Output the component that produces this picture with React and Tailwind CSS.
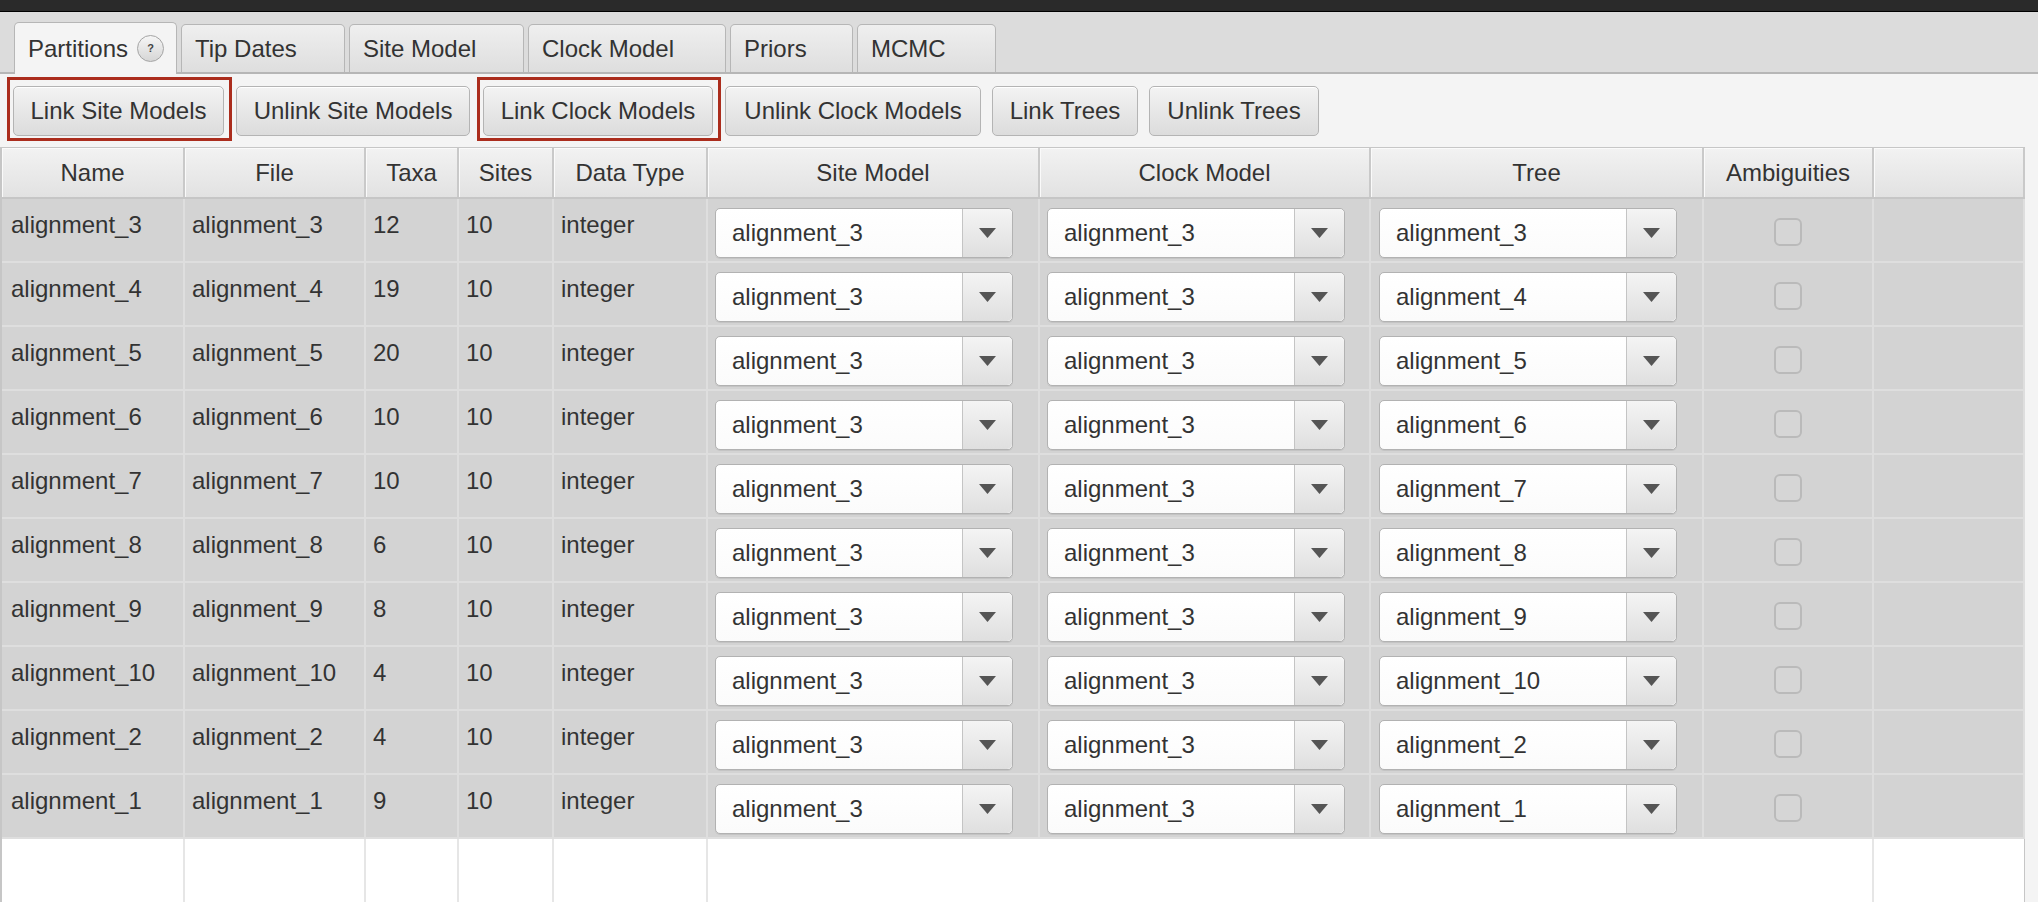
import React from 'react';

const FONT = { fontFamily: '"Liberation Sans", Arial, sans-serif' };

const rows = [
  ['alignment_3', 12, 'alignment_3'],
  ['alignment_4', 19, 'alignment_4'],
  ['alignment_5', 20, 'alignment_5'],
  ['alignment_6', 10, 'alignment_6'],
  ['alignment_7', 10, 'alignment_7'],
  ['alignment_8', 6, 'alignment_8'],
  ['alignment_9', 8, 'alignment_9'],
  ['alignment_10', 4, 'alignment_10'],
  ['alignment_2', 4, 'alignment_2'],
  ['alignment_1', 9, 'alignment_1'],
];

const cols = 'grid grid-cols-[183px_181px_93px_95px_154px_332px_331px_333px_170px_151px]';

const tabs = [
  { label: 'Partitions', w: 'w-[163px]', active: true },
  { label: 'Tip Dates', w: 'w-[164px]' },
  { label: 'Site Model', w: 'w-[175px]' },
  { label: 'Clock Model', w: 'w-[198px]' },
  { label: 'Priors', w: 'w-[123px]' },
  { label: 'MCMC', w: 'w-[139px]' },
];

const buttons = [
  { label: 'Link Site Models', cls: 'ml-[13px] w-[211px]', marked: true },
  { label: 'Unlink Site Models', cls: 'ml-[12px] w-[234px]' },
  { label: 'Link Clock Models', cls: 'ml-[13px] w-[230px]', marked: true },
  { label: 'Unlink Clock Models', cls: 'ml-[12px] w-[256px]' },
  { label: 'Link Trees', cls: 'ml-[11px] w-[146px]' },
  { label: 'Unlink Trees', cls: 'ml-[11px] w-[170px]' },
];

function Combo({ value }) {
  return (
    <div className="ml-[7px] mt-[9px] w-[298px] h-[50px] flex rounded-[5px] border border-[#b2b2b2] bg-linear-to-b from-white to-[#fbfbfb] shadow-[0_1px_0_#c4c4c4]">
      <div className="flex-1 pl-[16px] flex items-center text-[24px] leading-[28px] text-[#333]">{value}</div>
      <div className="w-[50px] border-l border-[#c4c4c4] rounded-r-[5px] bg-linear-to-b from-[#f4f4f4] to-[#dfdfdf] flex items-center justify-center">
        <svg width="17" height="10" viewBox="0 0 17 10">
          <path d="M0 0 H17 L8.5 10 Z" fill="#555" />
        </svg>
      </div>
    </div>
  );
}

export default function App() {
  const header = ['Name', 'File', 'Taxa', 'Sites', 'Data Type', 'Site Model', 'Clock Model', 'Tree', 'Ambiguities', ''];
  const cell = 'h-[64px] border-r-2 border-b-2 border-[#dedede] bg-[#d3d3d3] text-[24px] leading-[28px] text-[#333] pt-[12px] pl-[7px] whitespace-nowrap';
  const comboCell = 'h-[64px] border-r-2 border-b-2 border-[#dedede] bg-[#d3d3d3]';

  return (
    <div className="w-[2038px] h-screen overflow-hidden flex flex-col bg-[#f4f4f4]" style={FONT}>
      {/* window top */}
      <div className="h-[12px] bg-[#2a2a2a] border-b border-black shrink-0" />

      {/* tabs */}
      <div className="h-[62px] shrink-0 bg-[#dcdcdc] border-b-2 border-[#b6b6b6] flex items-end gap-[4px] pl-[14px]">
        {tabs.map((t) => (
          <div
            key={t.label}
            className={
              t.w +
              ' h-[50px] -mb-[2px] rounded-t-[5px] border border-b-0 border-[#b6b6b6] flex items-center pl-[13px] gap-[9px] text-[24px] leading-[28px] text-[#333] ' +
              (t.active ? 'bg-[#f4f4f4] h-[52px]' : 'bg-linear-to-b from-[#efefef] to-[#dedede] border-b-2')
            }
          >
            <span>{t.label}</span>
            {t.active && (
              <span className="w-[27px] h-[27px] rounded-full border border-[#a4a4a4] bg-linear-to-b from-[#f6f6f6] to-[#d6d6d6] flex items-center justify-center text-[11px] leading-none text-[#444] font-bold">
                ?
              </span>
            )}
          </div>
        ))}
      </div>

      {/* buttons */}
      <div className="flex pt-[12px] h-[73px] shrink-0">
        {buttons.map((b) => (
          <div key={b.label} className={'relative h-[50px] ' + b.cls}>
            <button className="w-full h-full rounded-[5px] border border-[#b4b4b4] bg-linear-to-b from-[#f3f3f3] to-[#dcdcdc] shadow-[inset_0_1px_0_#fff] text-[24px] leading-[28px] text-[#333]">
              {b.label}
            </button>
            {b.marked && (
              <span className="absolute -left-[6px] -right-[8px] -top-[9px] -bottom-[5px] border-[3px] border-[#ab2d1d] pointer-events-none" />
            )}
          </div>
        ))}
      </div>

      {/* table */}
      <div className="flex-1 flex flex-col w-[2025px] border-l-2 border-[#333] border-r border-[#c6c6c6] bg-white min-h-0">
        <div className={cols + ' h-[52px] shrink-0 border-t border-b-2 border-[#c6c6c6]'}>
          {header.map((h, i) => (
            <div
              key={i}
              className="border-r-2 border-[#c9c9c9] bg-linear-to-b from-[#f2f2f2] to-[#e2e2e2] shadow-[inset_1px_1px_0_#fafafa] flex items-center justify-center text-[24px] leading-[28px] text-[#333]"
            >
              {h}
            </div>
          ))}
        </div>

        {rows.map(([name, taxa, tree]) => (
          <div key={name} className={cols + ' shrink-0'}>
            <div className={cell + ' pl-[9px]'}>{name}</div>
            <div className={cell}>{name}</div>
            <div className={cell}>{taxa}</div>
            <div className={cell}>10</div>
            <div className={cell}>integer</div>
            <div className={comboCell}><Combo value="alignment_3" /></div>
            <div className={comboCell}><Combo value="alignment_3" /></div>
            <div className={comboCell + ' pl-[1px]'}><Combo value={tree} /></div>
            <div className={comboCell + ' flex justify-center'}>
              <div className="mt-[19px] w-[28px] h-[28px] rounded-[6px] border-2 border-[#bababa] bg-[#d6d6d6]" />
            </div>
            <div className={comboCell + ' border-r-0'} />
          </div>
        ))}

        <div className={cols + ' flex-1'}>
          <div className="border-r-2 border-[#e6e6e6]" />
          <div className="border-r-2 border-[#e6e6e6]" />
          <div className="border-r-2 border-[#e6e6e6]" />
          <div className="border-r-2 border-[#e6e6e6]" />
          <div className="border-r-2 border-[#e6e6e6]" />
          <div />
          <div />
          <div />
          <div className="border-r-2 border-[#e6e6e6]" />
          <div />
        </div>
      </div>
    </div>
  );
}
